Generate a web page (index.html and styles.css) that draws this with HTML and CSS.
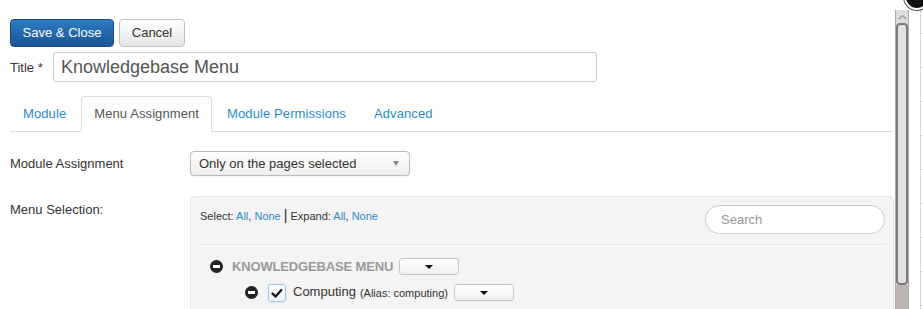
FILE: index.html
```html
<!DOCTYPE html>
<html>
<head>
<meta charset="utf-8">
<link rel="stylesheet" href="styles.css">
</head>
<body>
<div class="stage">
  <div class="modal">
    <div class="content">
      <div class="toolbar">
        <button class="btn btn-primary">Save &amp; Close</button>
        <button class="btn btn-default">Cancel</button>
      </div>
      <div class="title-row">
        <label class="title-label">Title *</label>
        <div class="title-input">Knowledgebase Menu</div>
      </div>
      <ul class="tabs">
        <li class="tab"><a>Module</a></li>
        <li class="tab active"><a>Menu Assignment</a></li>
        <li class="tab"><a>Module Permissions</a></li>
        <li class="tab"><a>Advanced</a></li>
      </ul>
      <div class="field-row assign-row">
        <div class="field-label">Module Assignment</div>
        <div class="select">
          <span>Only on the pages selected</span>
          <span class="select-arrow"></span>
        </div>
      </div>
      <div class="field-row menu-row">
        <div class="field-label">Menu Selection:</div>
        <div class="panel">
          <div class="panel-head">
            <div class="quick">Select: <a>All</a>, <a>None</a> <span class="bar">|</span> Expand: <a>All</a>, <a>None</a></div>
            <div class="search">Search</div>
          </div>
          <div class="tree">
            <div class="tree-row level0">
              <span class="minus"></span>
              <span class="menu-name">KNOWLEDGEBASE MENU</span>
              <span class="drop"><span class="caret"></span></span>
            </div>
            <div class="tree-row level1">
              <span class="minus"></span>
              <span class="check">
                <svg width="12" height="11" viewBox="0 0 12 11"><path d="M1.5 5.5 L4.6 8.6 L10.3 2" fill="none" stroke="#1a1a1a" stroke-width="2.3" stroke-linecap="round" stroke-linejoin="round"/></svg>
              </span>
              <span class="item-name">Computing</span>
              <span class="alias">(Alias: computing)</span>
              <span class="drop"><span class="caret"></span></span>
            </div>
          </div>
        </div>
      </div>
    </div>
    <div class="scrollbar">
      <div class="sb-up">
        <svg width="9" height="6" viewBox="0 0 9 6"><path d="M1 5 L4.5 1.5 L8 5" fill="none" stroke="#9a9a9a" stroke-width="1.2"/></svg>
      </div>
      <div class="sb-thumb"></div>
      <div class="sb-rest"></div>
    </div>
    <div class="behind">
      <div class="behind-col"></div>
    </div>
  </div>
  <div class="close-btn"></div>
</div>
</body>
</html>
```
FILE: styles.css
```css
* { box-sizing: border-box; }
html, body {
  margin: 0;
  padding: 0;
  background: #fff;
  font-family: "Liberation Sans", Arial, sans-serif;
  color: #333;
}
.stage {
  position: relative;
  width: 923px;
  height: 309px;
  overflow: hidden;
}
.modal {
  display: flex;
  height: 309px;
}
.content {
  width: 895px;
  padding: 19px 0 0 10px;
  flex: none;
}
.toolbar {
  display: flex;
  gap: 5px;
}
.btn {
  font-family: "Liberation Sans", Arial, sans-serif;
  font-size: 13px;
  height: 28px;
  border-radius: 4px;
  padding: 0;
  line-height: 26px;
  margin: 0;
  white-space: nowrap;
  text-align: center;
}
.btn-primary {
  width: 104px;
  color: #fff;
  background: linear-gradient(#2c7dc3, #1c5493);
  border: 1px solid #1a4a80;
}
.btn-default {
  width: 66px;
  color: #333;
  background: linear-gradient(#ffffff, #e6e6e6);
  border: 1px solid #c2c2c2;
}
.title-row {
  display: flex;
  align-items: center;
  margin-top: 5px;
}
.title-label {
  font-size: 13px;
  width: 43px;
  color: #333;
}
.title-input {
  width: 544px;
  height: 30px;
  border: 1px solid #ccc;
  border-radius: 3px;
  font-size: 18px;
  line-height: 28px;
  padding-left: 7px;
  color: #555;
}
.tabs {
  list-style: none;
  margin: 14px 0 0 0;
  padding: 0;
  display: flex;
  width: 883px;
  border-bottom: 1px solid #ddd;
  height: 36px;
}
.tab {
  margin-right: 2px;
  height: 36px;
}
.tab a {
  display: block;
  height: 36px;
  padding: 0 12px;
  line-height: 34px;
  font-size: 13px;
  letter-spacing: 0.1px;
  color: #2b8cc7;
  border: 1px solid transparent;
  border-radius: 4px 4px 0 0;
}
.tab.active a {
  color: #555;
  background: #fff;
  border-color: #ddd #ddd #fff #ddd;
}
.field-row {
  display: flex;
}
.field-label {
  width: 180px;
  font-size: 13px;
  color: #333;
}
.assign-row {
  margin-top: 19px;
  align-items: center;
}
.select {
  width: 220px;
  height: 25px;
  border: 1px solid #bbb;
  border-radius: 4px;
  background: linear-gradient(#fff, #eee);
  font-size: 13px;
  line-height: 22px;
  padding-left: 8px;
  display: flex;
  justify-content: space-between;
  align-items: center;
  padding-right: 10px;
  box-shadow: 0 1px 1px rgba(0,0,0,0.05);
}
.select-arrow {
  width: 0; height: 0;
  border-left: 3px solid transparent;
  border-right: 3px solid transparent;
  border-top: 5px solid #888;
}
.menu-row {
  margin-top: 20px;
}
.menu-row .field-label {
  padding-top: 6px;
}
.panel {
  width: 704px;
  height: 130px;
  background: #f4f4f4;
  border: 1px solid #e6e6e6;
  border-radius: 4px;
  padding: 8px 8px 0 9px;
}
.panel-head {
  display: flex;
  justify-content: space-between;
  height: 40px;
  border-bottom: 1px solid #e2e2e2;
  box-shadow: 0 1px 0 #fff;
}
.quick {
  font-size: 11px;
  color: #333;
  padding-top: 2px;
}
.quick a { color: #2b8cc7; }
.quick .bar { font-size: 14px; color: #222; }
.search {
  width: 180px;
  height: 29px;
  border: 1px solid #ccc;
  border-radius: 15px;
  background: #fff;
  font-size: 13px;
  color: #999;
  line-height: 27px;
  padding-left: 15px;
}
.tree {
  padding: 13px 0 0 10px;
}
.tree-row {
  display: flex;
  align-items: center;
  height: 17px;
}
.level1 {
  margin-top: 9px;
  padding-left: 35px;
}
.minus {
  position: relative;
  width: 13px;
  height: 13px;
  border-radius: 50%;
  background: #222;
  flex: none;
}
.minus::after {
  content: "";
  position: absolute;
  left: 3px;
  top: 5px;
  width: 7px;
  height: 3px;
  background: #fff;
}
.menu-name {
  margin-left: 9px;
  font-size: 13px;
  letter-spacing: -0.15px;
  font-weight: bold;
  color: #999;
}
.level0 .drop { margin-left: 6px; }
.drop {
  display: inline-flex;
  align-items: center;
  justify-content: center;
  width: 60px;
  height: 17px;
  border: 1px solid #c6c6c6;
  border-radius: 3px;
  background: linear-gradient(#fff, #f0f0f0);
}
.caret {
  width: 0; height: 0;
  border-left: 4px solid transparent;
  border-right: 4px solid transparent;
  border-top: 4px solid #111;
}
.check {
  margin-left: 10px;
  width: 18px;
  height: 18px;
  border: 1px solid #9cc8e0;
  border-radius: 3px;
  background: linear-gradient(#fff, #eef3f6);
  box-shadow: 0 0 2px #bde0f2;
  display: inline-flex;
  align-items: center;
  justify-content: center;
  padding-top: 2px;
}
.item-name {
  margin-left: 7px;
  font-size: 13px;
  color: #333;
  position: relative;
  top: -1px;
}
.alias {
  margin-left: 4px;
  font-size: 11px;
  color: #333;
}
.level1 .drop { margin-left: 6px; }
.scrollbar {
  width: 14px;
  flex: none;
  margin-top: 10px;
  display: flex;
  flex-direction: column;
  background: #e6e3e0;
  border-left: 1px solid #aaa;
  border-right: 1px solid #aaa;
}
.sb-up {
  height: 13px;
  display: flex;
  justify-content: center;
  align-items: center;
  background: #dedbd8;
}
.sb-thumb {
  height: 262px;
  border: 2px solid #7b7b7b;
  border-radius: 4px;
  background: #e2dfdc;
}
.sb-rest {
  flex: 1;
  background: #bdb3b1;
}
.behind {
  flex: 1;
  position: relative;
  background: #fff;
}
.behind-col {
  margin-left: 11px;
  height: 309px;
  border-left: 1px solid #d5d5d5;
  background: repeating-linear-gradient(#fff 0, #fff 33px, #ddd 33px, #ddd 34px);
}
.close-btn {
  position: absolute;
  left: 904px;
  top: -16px;
  width: 26px;
  height: 26px;
  border-radius: 50%;
  background: #111;
  border: 2px solid #fff;
  box-shadow: 0 0 0 1px #555;
}
```
